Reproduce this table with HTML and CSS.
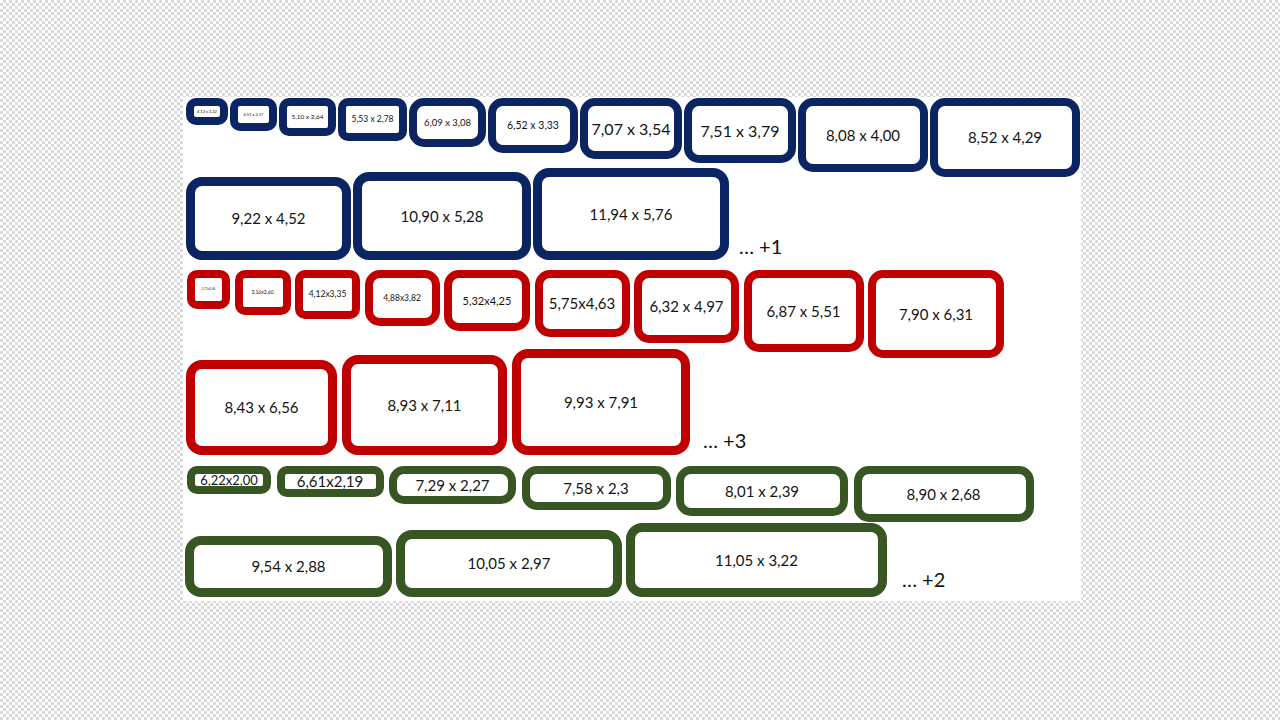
FILE: index.html
```html
<!DOCTYPE html>
<html lang="pt">
<head>
<meta charset="utf-8">
<title>Tamanhos</title>
<link rel="stylesheet" href="styles.css">
</head>
<body>
<main class="canvas">
  <div class="row r1">
    <div class="box navy sm f4" style="width:42px;height:27px">4,12 x 2,22</div>
    <div class="box navy sm f4" style="width:47px;height:33px">4,51 x 2,37</div>
    <div class="box navy sm f6" style="width:57px;height:38px">5,10 x 2,64</div>
    <div class="box navy sm f8" style="width:69px;height:43px">5,53 x 2,78</div>
    <div class="box navy f9" style="width:77px;height:49px">6,09 x 3,08</div>
    <div class="box navy f10" style="width:90px;height:55px">6,52 x 3,33</div>
    <div class="box navy f16" style="width:102px;height:61px">7,07 x 3,54</div>
    <div class="box navy f16" style="width:112px;height:65px">7,51 x 3,79</div>
    <div class="box navy f15" style="width:130px;height:74px">8,08 x 4,00</div>
    <div class="box navy f15" style="width:150px;height:79px">8,52 x 4,29</div>
  </div>
  <div class="row r2">
    <div class="box navy lg f15" style="width:165px;height:83px">9,22 x 4,52</div>
    <div class="box navy lg f15" style="width:178px;height:88px">10,90 x 5,28</div>
    <div class="box navy lg f15" style="width:196px;height:92px">11,94 x 5,76</div>
    <span class="more m1">… +1</span>
  </div>
  <div class="row r3">
    <div class="box red sm f3" style="width:43px;height:39px">2,71x2,06</div>
    <div class="box red sm f5" style="width:56px;height:45px">3,16x2,60</div>
    <div class="box red sm f8" style="width:65px;height:49px">4,12x3,35</div>
    <div class="box red f8" style="width:75px;height:56px">4,88x3,82</div>
    <div class="box red f11" style="width:86px;height:61px">5,32x4,25</div>
    <div class="box red f15" style="width:95px;height:67px">5,75x4,63</div>
    <div class="box red f15" style="width:105px;height:73px">6,32 x 4,97</div>
    <div class="box red f15" style="width:120px;height:82px">6,87 x 5,51</div>
    <div class="box red f15" style="width:136px;height:88px">7,90 x 6,31</div>
  </div>
  <div class="row r4">
    <div class="box red lg f15" style="width:151px;height:95px">8,43 x 6,56</div>
    <div class="box red lg f15" style="width:165px;height:100px">8,93 x 7,11</div>
    <div class="box red lg f15" style="width:178px;height:106px">9,93 x 7,91</div>
    <span class="more m3">… +3</span>
  </div>
  <div class="row r5">
    <div class="box green sm f13" style="width:84px;height:28px">6,22x2,00</div>
    <div class="box green sm f15" style="width:107px;height:31px">6,61x2,19</div>
    <div class="box green f15" style="width:127px;height:38px">7,29 x 2,27</div>
    <div class="box green f15" style="width:149px;height:44px">7,58 x 2,3</div>
    <div class="box green f15" style="width:172px;height:50px">8,01 x 2,39</div>
    <div class="box green f15" style="width:180px;height:56px">8,90 x 2,68</div>
  </div>
  <div class="row r6">
    <div class="box green lg f15" style="width:207px;height:61px">9,54 x 2,88</div>
    <div class="box green lg f15" style="width:226px;height:67px">10,05 x 2,97</div>
    <div class="box green lg f15" style="width:261px;height:74px">11,05 x 3,22</div>
    <span class="more m2">… +2</span>
  </div>
</main>
</body>
</html>
```
FILE: styles.css
```css
html, body {
  margin: 0;
  padding: 0;
}
body {
  width: 1280px;
  height: 720px;
  overflow: hidden;
  background: conic-gradient(#dadada 25%, #ffffff 0 50%, #dadada 0 75%, #ffffff 0) 0 0 / 6px 6px;
  font-family: Lato, "Open Sans", "Liberation Sans", sans-serif;
  color: #141414;
  padding-top: 97px;
  box-sizing: border-box;
}
.canvas {
  margin-left: 183px;
  width: 898px;
  height: 504px;
  background: #ffffff;
  box-sizing: border-box;
  padding: 1px 0 0 3px;
}
.row {
  display: flex;
  box-sizing: border-box;
}
.r1 { height: 69px; align-items: flex-start; gap: 2px; }
.r2 { height: 93px; align-items: flex-end; gap: 2px; }
.r3 { height: 79px; margin-top: 10px; align-items: flex-start; gap: 4.5px; padding-left: 1px; }
.r4 { height: 106px; align-items: flex-end; gap: 5px; }
.r5 { height: 57px; margin-top: 11px; align-items: flex-start; gap: 5.5px; padding-left: 1px; }
.r6 { height: 74px; align-items: flex-end; gap: 4px; margin-left: -1px; }

.box {
  flex: none;
  box-sizing: border-box;
  border: 8px solid;
  border-radius: 15px;
  background: #ffffff;
  display: flex;
  align-items: center;
  justify-content: center;
  white-space: nowrap;
  line-height: 1;
  overflow: hidden;
}
.box.sm { border-radius: 10px; }
.box.lg { border-width: 9px; border-radius: 16px; }

.navy { border-color: #0b2462; }
.red { border-color: #c00000; }
.green { border-color: #375623; }

.f3 { font-size: 3px; }
.f4 { font-size: 4px; }
.f5 { font-size: 5px; }
.f6 { font-size: 6.5px; }
.f8 { font-size: 8.5px; }
.f9 { font-size: 9.5px; }
.f10 { font-size: 10.5px; }
.f11 { font-size: 11px; }
.f13 { font-size: 13px; }
.f15 { font-size: 15px; }
.f16 { font-size: 16px; }

.more {
  flex: none;
  font-size: 20px;
  line-height: 20px;
  white-space: nowrap;
  align-self: flex-end;
}
.m1 { margin-left: 8px; margin-bottom: 4px; }
.m3 { margin-left: 8px; margin-bottom: 5px; }
.m2 { margin-left: 11px; margin-bottom: 8px; }
```
